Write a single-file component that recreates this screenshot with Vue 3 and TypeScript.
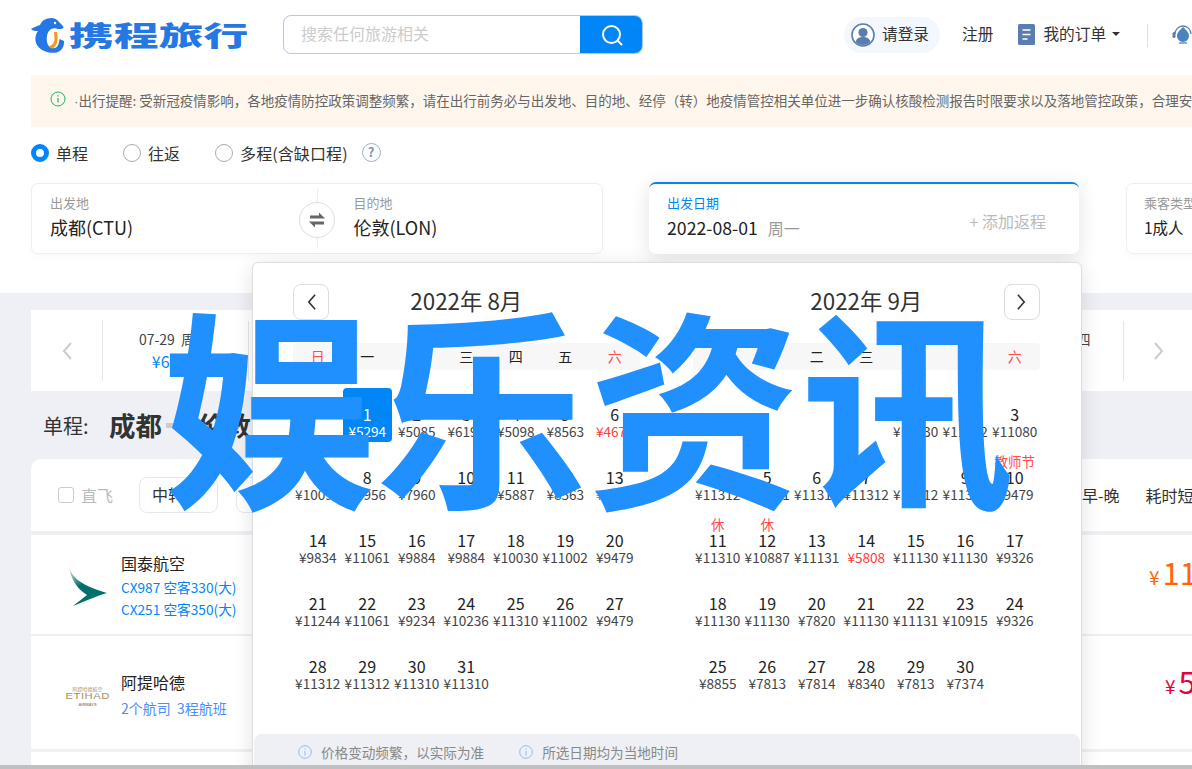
<script setup lang="ts">
interface Day { d: number; p: number; low?: boolean; sel?: boolean; tag?: string }
interface Month { title: string; offset: number; days: Day[] }

const week = ['日', '一', '二', '三', '四', '五', '六']

const augPrices = [5294, 5085, 6198, 5098, 8563, 4674, 10097, 7956, 7960, 9884, 5887, 8563, 4738, 9834, 11061, 9884, 9884, 10030, 11002, 9479, 11244, 11061, 9234, 10236, 11310, 11002, 9479, 11312, 11312, 11310, 11310]
const sepPrices = [11130, 11312, 11080, 11312, 11131, 11310, 11312, 11312, 11310, 9479, 11310, 10887, 11131, 5808, 11130, 11130, 9326, 11130, 11130, 7820, 11130, 11131, 10915, 9326, 8855, 7813, 7814, 8340, 7813, 7374]

const months: Month[] = [
  {
    title: '2022年 8月',
    offset: 1,
    days: augPrices.map((p, i) => ({ d: i + 1, p, low: i === 5 || i === 12, sel: i === 0 })),
  },
  {
    title: '2022年 9月',
    offset: 4,
    days: sepPrices.map((p, i) => ({
      d: i + 1,
      p,
      low: i === 13,
      tag: i === 9 ? '教师节' : i === 10 || i === 11 ? '休' : undefined,
    })),
  },
]
</script>

<template>
  <div class="page">
    <div class="main">
      <section class="top">
        <header class="header">
          <div class="logo">
            <svg class="dolphin" viewBox="0 0 33 36" width="33" height="36">
              <path fill="#2577e3" d="M13 3C18 0 25 0 28 5C30 7 32.500 9 32.500 10.500C32.500 12 28 12.500 25 11.500C20 10.500 17 14 16 19C15 25 17 30 21 31C26 32 28 28 28.500 22L33 24C33.500 30 30 35 24 35.800C15 36.500 6 32 4.500 24C4 20 5 17 7 14C4 14 2 14 0 12C3 10 6 9 9 8C10 6 11 4 13 3Z" />
              <path fill="#f39a21" d="M23 15L26 15C27.500 22 26.500 28 22.500 31C20.500 32 18.500 31 17.500 29C20.500 29 23 27 23.500 22Z" />
              <circle cx="24" cy="6" r="1.200" fill="#fff" />
            </svg>
            <span class="logo-text">携程旅行</span>
          </div>
          <div class="search">
            <span class="search-ph">搜索任何旅游相关</span>
            <button class="search-btn">
              <svg viewBox="0 0 24 24" width="24" height="24" fill="none" stroke="#fff" stroke-width="2">
                <circle cx="11.500" cy="11.500" r="8.500" />
                <path d="M18 18l3.500 3.500" stroke-linecap="round" />
              </svg>
            </button>
          </div>
          <div class="login">
            <svg viewBox="0 0 24 24" width="24" height="24">
              <circle cx="12" cy="12" r="11" fill="#fff" stroke="#5a7db0" stroke-width="1.600" />
              <circle cx="12" cy="9.500" r="4.600" fill="#5a7db0" />
              <path fill="#5a7db0" d="M4.500 19c1-4 4-5 7.500-5s6.500 1 7.500 5c-2 2-4.500 3-7.500 3s-5.500-1-7.500-3z" />
            </svg>
            <span class="h-text">请登录</span>
          </div>
          <span class="reg h-text">注册</span>
          <svg class="order-icon" viewBox="0 0 17 21" width="17" height="21">
            <rect width="17" height="21" rx="1.500" fill="#5a7db0" />
            <path d="M4.500 6h8M4.500 10.500h8M4.500 15h5" stroke="#fff" stroke-width="1.600" />
          </svg>
          <span class="order h-text">我的订单</span>
          <i class="caret"></i>
          <i class="vline"></i>
          <svg class="headset" viewBox="0 0 22 22" width="22" height="22">
            <path d="M3 11a8 8 0 0 1 16 0" fill="none" stroke="#5a7db0" stroke-width="1.300" />
            <rect x="0.500" y="9" width="3" height="6" rx="1.500" fill="#5a7db0" />
            <path fill="#4a83c0" d="M11 4c3 3 6 5.500 6 9a6 6 0 0 1-12 0c0-3.500 3-6 6-9z" />
            <path d="M7 20h8" stroke="#5a7db0" stroke-width="1.300" />
          </svg>
        </header>

        <div class="notice">
          <svg viewBox="0 0 16 16" width="16" height="16" fill="none" stroke="#19b36b" stroke-width="1">
            <circle cx="8" cy="8" r="7" />
            <path d="M8 7v4.500M8 4.300v1.200" stroke-width="1.200" />
          </svg>
          <span class="notice-text"><span class="dot">·</span>出行提醒: 受新冠疫情影响&#xFF0C;各地疫情防控政策调整频繁&#xFF0C;请在出行前务必与出发地、目的地、经停&#xFF08;转&#xFF09;地疫情管控相关单位进一步确认核酸检测报告时限要求以及落地管控政策&#xFF0C;合理安排行程。</span>
        </div>

        <div class="radios">
          <span class="radio on"></span><span class="r-label r1">单程</span>
          <span class="radio"></span><span class="r-label r2">往返</span>
          <span class="radio"></span><span class="r-label r3">多程(含缺口程)</span>
          <span class="help">?</span>
        </div>

        <div class="fields">
          <div class="card route">
            <div class="field">
              <div class="f-label">出发地</div>
              <div class="f-value">成都(CTU)</div>
            </div>
            <div class="swap">
              <svg viewBox="0 0 20 20" width="20" height="20" fill="#666">
                <path d="M3 5.500h9V2.500l6 6H3zM17 11.500H2l6 6v-3h9z" />
              </svg>
            </div>
            <div class="field f2">
              <div class="f-label">目的地</div>
              <div class="f-value">伦敦(LON)</div>
            </div>
          </div>
          <div class="card date">
            <div>
              <div class="f-label blue">出发日期</div>
              <div class="f-value dateval">2022-08-01<span class="wk">周一</span></div>
            </div>
            <span class="add">+ 添加返程</span>
          </div>
          <div class="card pax">
            <div class="f-label">乘客类型</div>
            <div class="paxval">1成人</div>
          </div>
        </div>
      </section>

      <section class="strip">
        <div class="arrow">
          <svg viewBox="0 0 12 20" width="12" height="20" fill="none" stroke="#ccc" stroke-width="2"><path d="M10 2L3 10l7 8" /></svg>
        </div>
        <div class="strip-item first">
          <div class="s-date">07-29&nbsp; 周五</div>
          <div class="s-price">¥6520</div>
        </div>
        <div class="strip-item last">
          <div class="s-date">08-04&nbsp; 周四</div>
          <div class="s-price">¥5098</div>
        </div>
        <div class="arrow right">
          <svg viewBox="0 0 12 20" width="12" height="20" fill="none" stroke="#ccc" stroke-width="2"><path d="M2 2l7 8-7 8" /></svg>
        </div>
      </section>

      <div class="heading">
        <span class="h-type">单程:</span>
        <b>成都</b>
        <i class="dash"></i>
        <b>伦敦</b>
      </div>

      <div class="filters">
        <span class="check"></span>
        <span class="direct">直飞</span>
        <span class="pick">中转</span>
        <span class="pick">航空</span>
        <div class="sorts"><span>早-晚</span><span>耗时短</span></div>
      </div>

      <div class="row r-a">
        <svg class="cx" viewBox="0 0 40 40" width="40" height="40">
          <defs>
            <linearGradient id="cxg" x1="0" y1="0" x2="0.400" y2="0.700">
              <stop offset="0" stop-color="#e4efec" />
              <stop offset="0.700" stop-color="#00706a" />
            </linearGradient>
          </defs>
          <path fill="url(#cxg)" d="M1 0C4 10 12 18 39 26C28 29 15 35 5 39C10 35 15 31 19 28C9 22 3 12 1 0Z" />
        </svg>
        <div class="air">
          <div class="air-name">国泰航空</div>
          <div class="air-sub">CX987 空客330(大)</div>
          <div class="air-sub">CX251 空客350(大)</div>
        </div>
        <div class="price orange"><small>¥</small>11</div>
      </div>

      <div class="row r-b">
        <div class="etihad">
          <span class="e-top">阿提哈德航空</span>
          <span class="e-mid">ETIHAD</span>
          <span class="e-bot">AIRWAYS</span>
        </div>
        <div class="air">
          <div class="air-name">阿提哈德</div>
          <div class="air-sub purple">2个航司&nbsp;&nbsp;3程航班</div>
        </div>
        <div class="price red"><small>¥</small>5</div>
      </div>

      <div class="row r-c"></div>

      <div class="popup">
        <div class="months">
          <div v-for="(m, mi) in months" :key="m.title" class="month">
            <div class="m-head">
              <button v-if="mi === 0" class="nav prev">
                <svg viewBox="0 0 12 20" width="11" height="18" fill="none" stroke="#333" stroke-width="1.800"><path d="M10 2L3 10l7 8" /></svg>
              </button>
              <span class="m-title">{{ m.title }}</span>
              <button v-if="mi === 1" class="nav next">
                <svg viewBox="0 0 12 20" width="11" height="18" fill="none" stroke="#333" stroke-width="1.800"><path d="M2 2l7 8-7 8" /></svg>
              </button>
            </div>
            <div class="weeks">
              <span v-for="(w, i) in week" :key="w" :class="{ wkend: i === 0 || i === 6 }">{{ w }}</span>
            </div>
            <div class="grid">
              <span v-for="n in m.offset" :key="'e' + n"></span>
              <div v-for="day in m.days" :key="day.d" class="cell" :class="{ sel: day.sel }">
                <span v-if="day.tag" class="tag">{{ day.tag }}</span>
                <span class="num">{{ day.d }}</span>
                <span class="amt" :class="{ low: day.low }">¥{{ day.p }}</span>
              </div>
            </div>
          </div>
        </div>
        <div class="foot">
          <svg viewBox="0 0 14 14" width="14" height="14" fill="none" stroke="#8fbdf0"><circle cx="7" cy="7" r="6.300" /><path d="M7 6v4.500M7 3.500v1.200" /></svg>
          <span>价格变动频繁&#xFF0C;以实际为准</span>
          <svg class="ic2" viewBox="0 0 14 14" width="14" height="14" fill="none" stroke="#8fbdf0"><circle cx="7" cy="7" r="6.300" /><path d="M7 6v4.500M7 3.500v1.200" /></svg>
          <span>所选日期均为当地时间</span>
        </div>
      </div>

      <div class="watermark">娱乐资讯</div>
    </div>
    <div class="bar"></div>
  </div>
</template>

<style>
html, body { margin: 0; background: #fff; }
</style>

<style scoped>
* { box-sizing: border-box; }
.page { width: 1192px; height: 769px; overflow: hidden; font-family: "Noto Sans CJK SC", sans-serif; color: #333; font-size: 14px; }
.main { position: relative; height: 765px; overflow: hidden; background: #eef0f5; }
.bar { height: 4px; background: #c0c0c0; }
.top { background: #fff; height: 293px; }
.header { display: flex; align-items: center; height: 70px; padding-left: 31px; margin-bottom: 5px; white-space: nowrap; }
.h-text { font-size: 15.700px; margin-top: -3px; }
.logo { width: 252px; flex: none; display: flex; align-items: center; }
.dolphin { flex: none; }
.logo-text { display: inline-block; margin-left: 5px; font-size: 27px; line-height: 30px; font-weight: 900; color: #2577e3; transform: scaleX(1.660); transform-origin: left center; }
.search { width: 360px; height: 39px; flex: none; display: flex; border: 1px solid #a6cdf3; border-radius: 8px; overflow: hidden; margin-top: -1px; }
.search-ph { flex: 1; padding-left: 17px; font-size: 16px; line-height: 35px; color: #ccc; }
.search-btn { width: 63px; border: 0; margin: -1px; background: #0086f6; padding: 0; display: flex; align-items: center; justify-content: center; }
.login { margin-left: 201px; width: 96px; height: 36px; flex: none; display: flex; align-items: center; gap: 7px; padding-left: 7px; border-radius: 18px; background: #f2f8fe; }
.reg { margin-left: 22px; }
.order-icon { margin-left: 25px; flex: none; margin-top: -2px; }
.order { margin-left: 8px; }
.caret { margin-left: 6px; width: 0; height: 0; border: 4px solid transparent; border-top: 4px solid #333; border-bottom: 0; margin-top: -2px; }
.vline { margin-left: 27px; width: 1px; height: 23px; background: #dcdfe6; flex: none; }
.headset { margin-left: 24px; flex: none; margin-top: -2px; }
.notice { margin-left: 31px; height: 52px; background: #fff7ed; display: flex; align-items: center; padding-left: 19px; white-space: nowrap; overflow: hidden; padding-bottom: 3px; }
.notice svg { flex: none; margin-top: -2px; }
.notice-text { margin-left: 8px; color: #666; font-size: 13.500px; }
.dot { font-family: "Liberation Sans", sans-serif; }
.radios { display: flex; align-items: center; height: 26px; margin-top: 13px; padding-left: 31px; font-size: 16px; }
.radio { width: 18px; height: 18px; border-radius: 50%; border: 1.500px solid #aaa; flex: none; }
.radio.on { border: 5px solid #0086f6; }
.r-label { margin-left: 7px; margin-top: -1px; }
.r1 { margin-right: 35px; }
.r2 { margin-right: 35px; }
.r3 { letter-spacing: 0.100px; }
.help { margin-left: 14px; width: 19px; height: 19px; border-radius: 50%; border: 1.500px solid #9db0d0; color: #7f93b8; font-size: 13px; line-height: 16px; text-align: center; font-weight: 700; margin-top: -1px; }
.fields { display: flex; margin-top: 17px; padding-left: 31px; }
.card { flex: none; height: 71px; background: #fff; border: 1px solid #eee; border-radius: 7px; box-shadow: 0 2px 8px rgba(0, 0, 0, 0.03); }
.route { width: 572px; display: flex; position: relative; }
.route::before { content: ""; position: absolute; left: 285px; top: 4px; bottom: 4px; width: 1px; background: #eee; }
.field { padding: 9px 0 0 18px; width: 303px; }
.f2 { padding-left: 19px; width: 268px; }
.f-label { font-size: 13px; line-height: 19px; color: #999; }
.f-label.blue { color: #0086f6; }
.f-value { font-size: 18px; line-height: 26px; margin-top: 2px; color: #222; white-space: nowrap; }
.swap { position: absolute; left: 267px; top: 18px; width: 36px; height: 36px; border-radius: 50%; background: #fff; border: 1px solid #ddd; display: flex; align-items: center; justify-content: center; }
.date { margin-left: 46px; width: 430px; height: 72px; margin-top: -1px; display: flex; justify-content: space-between; align-items: flex-start; border: 0; border-top: 2px solid #0086f6; padding: 9px 33px 0 18px; box-shadow: 0 4px 20px rgba(0, 0, 0, 0.12); border-radius: 7px; }
.dateval { font-size: 17.700px; }
.wk { margin-left: 10px; font-size: 16px; color: #999; }
.add { font-size: 16px; color: #bbb; margin-top: 16px; }
.pax { margin-left: 47px; width: 200px; padding: 9px 0 0 17px; }
.paxval { font-size: 15.500px; line-height: 26px; margin-top: 2px; color: #222; }
.strip { margin: 17px 0 0 31px; height: 81px; background: #fff; display: flex; align-items: center; position: relative; justify-content: flex-start; }
.arrow { width: 71px; flex: none; height: 60px; display: flex; align-items: center; justify-content: center; }
.arrow.right { width: 71px; border-left: 1px solid #e6e6e6; position: absolute; left: 1092px; top: 11px; }
.strip-item { width: 147px; height: 60px; border-left: 1px solid #e6e6e6; border-right: 1px solid #e6e6e6; text-align: center; padding-top: 7px; padding-right: 3px; }
.strip-item.last { position: absolute; left: 945px; top: 11px; border: 0; padding-left: 12px; padding-right: 0; }
.s-date { font-size: 14px; line-height: 22px; color: #444; }
.s-price { font-size: 16px; line-height: 22px; color: #0086f6; }
.heading { height: 68px; margin-left: 43px; display: flex; align-items: center; }
.h-type { font-size: 20px; width: 66px; }
.heading b { font-size: 26.500px; line-height: 32px; }
.dash { width: 22px; height: 5px; background: #ccc; margin: 0 10px 0 4px; }
.filters { margin-left: 31px; height: 72px; background: #fff; border-radius: 10px 0 0 0; display: flex; align-items: center; padding-left: 27px; font-size: 16px; position: relative; }
.check { width: 16px; height: 16px; border: 1px solid #ccc; border-radius: 3px; }
.direct { margin-left: 7px; color: #bbb; margin-top: -1px; }
.pick { margin-left: 26px; width: 79px; height: 36px; border: 1px solid #e8e8e8; border-radius: 8px; line-height: 33px; padding-left: 12px; }
.pick + .pick { margin-left: 18px; }
.sorts { margin-left: auto; width: 110px; display: flex; gap: 26px; overflow: hidden; white-space: nowrap; flex: none; margin-top: -1px; }
.row { margin-left: 31px; background: #fff; display: flex; align-items: center; position: relative; }
.r-a { margin-top: 4px; height: 99px; padding-left: 37px; }
.r-b { margin-top: 2px; height: 113px; padding-left: 35px; }
.r-c { margin-top: 3px; height: 30px; }
.cx { flex: none; margin-top: 4px; }
.air { margin-left: 13px; }
.r-b .air { padding-top: 4px; margin-left: 14px; }
.air-name { font-size: 16px; line-height: 26px; color: #222; }
.air-sub { font-size: 13.700px; line-height: 22px; color: #0086f6; white-space: nowrap; }
.air-sub.purple { color: #4d8df6; margin-top: 1px; line-height: 24px; font-size: 14px; }
.price { margin-left: auto; font-size: 31px; line-height: 40px; white-space: nowrap; overflow: hidden; flex: none; }
.price small { font-size: 19px; margin-right: 3px; }
.orange { color: #ff6600; width: 43px; margin-top: -20px; }
.red { color: #e6003c; width: 27px; margin-top: -18px; }
.etihad { width: 43px; display: flex; flex-direction: column; align-items: center; color: #a88f5e; flex: none; margin: 8px -2px 0 0; }
.e-top { font-size: 5px; line-height: 7px; white-space: nowrap; }
.e-mid { font-size: 9px; line-height: 9px; letter-spacing: 0.400px; font-family: "Liberation Sans", sans-serif; transform: scaleX(1.250); }
.e-bot { font-size: 4px; line-height: 7px; font-family: "Liberation Sans", sans-serif; font-weight: 700; }
.popup { position: absolute; left: 252px; top: 262px; width: 830px; height: 520px; background: #fff; border: 1px solid #ddd; border-radius: 6px; box-shadow: 0 4px 20px rgba(0, 0, 0, 0.12); }
.months { display: flex; padding-left: 40px; }
.month { width: 346.500px; flex: none; }
.month + .month { margin-left: 53.500px; }
.m-head { position: relative; height: 36px; margin-top: 21px; text-align: center; }
.m-title { font-size: 22.400px; line-height: 32px; color: #333; display: block; }
.nav { position: absolute; top: 0; width: 36px; height: 36px; background: #fff; border: 1px solid #ddd; border-radius: 8px; display: flex; align-items: center; justify-content: center; padding: 0; }
.prev { left: 0; }
.next { right: 0; }
.weeks { margin-top: 23px; height: 27px; background: #f7f7f7; border-radius: 4px; display: grid; grid-template-columns: repeat(7, 1fr); text-align: center; font-size: 14px; line-height: 27px; color: #222; }
.wkend { color: #ff4d4d; }
.grid { margin-top: 18px; display: grid; grid-template-columns: repeat(7, 49.500px); grid-auto-rows: 54px; row-gap: 9px; }
.cell { position: relative; display: flex; flex-direction: column; align-items: center; padding-top: 16px; border-radius: 4px; white-space: nowrap; }
.cell.sel { background: #0086f6; color: #fff; }
.cell.sel .amt, .cell.sel .num { color: #fff; }
.num { font-size: 16px; line-height: 20px; color: #222; }
.amt { font-size: 13.600px; line-height: 16px; margin-top: -1px; color: #444; }
.amt.low { color: #ff3b3b; }
.tag { position: absolute; top: 1px; left: 0; right: 0; text-align: center; font-size: 13.500px; line-height: 18px; color: #ff4d4d; }
.foot { position: absolute; left: 1px; right: 1px; top: 471px; height: 50px; background: #eef0f5; border-radius: 8px 8px 0 0; display: flex; align-items: flex-start; padding: 11px 0 0 44px; font-size: 13.600px; line-height: 14px; color: #888; white-space: nowrap; }
.foot span { margin-left: 9px; }
.ic2 { margin-left: 35px; }
.watermark { position: absolute; left: 162px; top: 249px; font-size: 213px; line-height: 300px; color: #2090ff; font-weight: 700; white-space: nowrap; pointer-events: none; }
</style>
